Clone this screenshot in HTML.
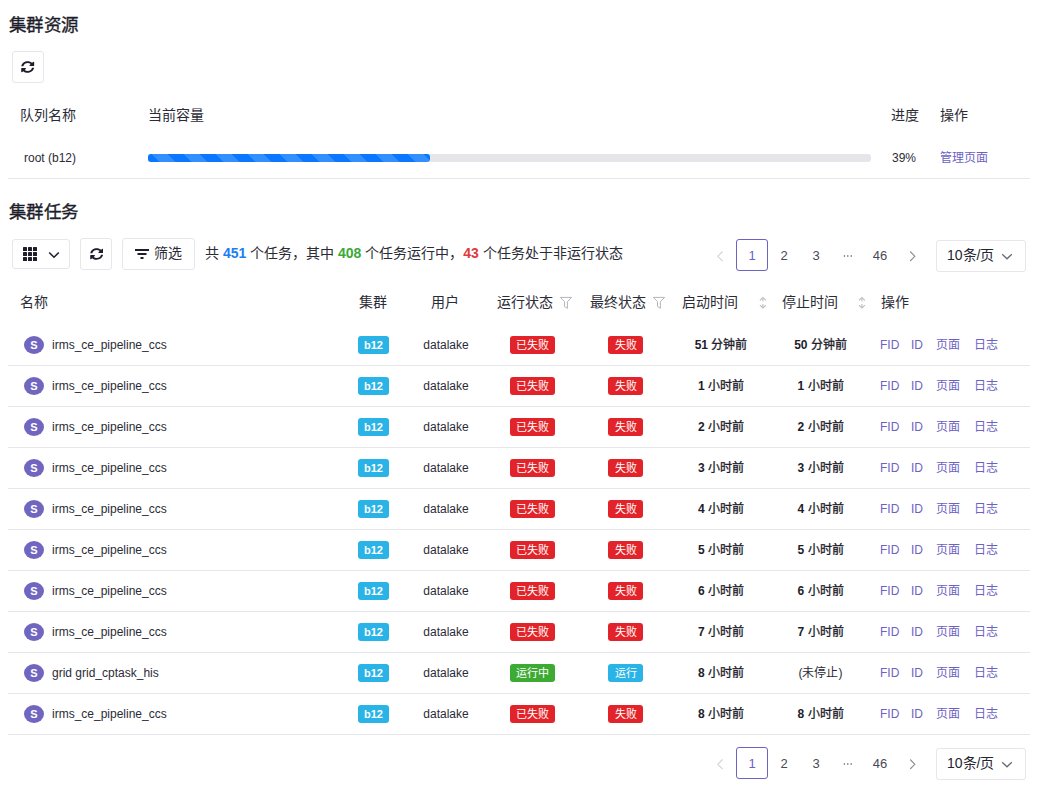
<!DOCTYPE html>
<html lang="zh-CN"><head><meta charset="utf-8"><title>集群</title>
<style>
html,body{margin:0;padding:0;background:#fff;}
body{width:1039px;height:790px;position:relative;overflow:hidden;font-family:"Liberation Sans", sans-serif;}
.t{position:absolute;white-space:nowrap;}
.cj{font-weight:500;-webkit-text-stroke:0.3px #1d1d2b;}
.b{position:absolute;}
.av{position:absolute;width:20px;height:18px;border-radius:50%;background:#7066c0;color:#fff;font-size:11px;font-weight:bold;line-height:18px;text-align:center;}
.tag{position:absolute;height:18px;line-height:19px;border-radius:3px;color:#fff;font-size:11px;font-weight:500;text-align:center;}
</style></head><body>
<div class="t" style="left:8.6px;top:11.9px;font-size:17.5px;line-height:26px;color:#1d1d2b;font-weight:500;-webkit-text-stroke:0.35px #1d1d2b;letter-spacing:0.5px;">集群资源</div>
<div class="b" style="left:12px;top:51px;width:32px;height:32px;border:1px solid #e6e6eb;border-radius:3px;box-sizing:border-box;"></div>
<svg width="13.4" height="12" viewBox="0 0 512 512" preserveAspectRatio="none" style="position:absolute;left:21.2px;top:60.6px"><path fill="#1d1d2b" d="M370.72 133.28C339.458 104.008 298.888 87.962 255.848 88c-77.458.068-144.328 53.178-162.791 126.85-1.344 5.363-6.122 9.15-11.651 9.15H24.103c-7.498 0-13.194-6.807-11.807-14.176C33.933 94.924 134.813 8 256 8c66.448 0 126.791 26.136 171.315 68.685L463.03 40.97C478.149 25.851 504 36.559 504 57.941V192c0 13.255-10.745 24-24 24H345.941c-21.382 0-32.09-25.851-16.971-40.971l41.75-41.749zM32 296h134.059c21.382 0 32.09 25.851 16.971 40.971l-41.75 41.75c31.262 29.273 71.835 45.319 114.876 45.28 77.418-.07 144.315-53.144 162.787-126.849 1.344-5.363 6.122-9.15 11.651-9.15h57.304c7.498 0 13.193 6.807 11.807 14.176C478.067 417.076 377.187 504 256 504c-66.448 0-126.791-26.136-171.315-68.685L48.97 471.03C33.851 486.149 8 475.441 8 454.059V320c0-13.255 10.745-24 24-24z"/></svg>
<div class="t" style="left:20px;top:105px;font-size:14px;line-height:20px;color:#2b2b36;font-weight:normal;">队列名称</div>
<div class="t" style="left:148px;top:105px;font-size:14px;line-height:20px;color:#2b2b36;font-weight:normal;">当前容量</div>
<div class="t" style="left:891px;top:105px;font-size:14px;line-height:20px;color:#2b2b36;font-weight:normal;">进度</div>
<div class="t" style="left:940px;top:105px;font-size:14px;line-height:20px;color:#2b2b36;font-weight:normal;">操作</div>
<div class="t" style="left:24px;top:149px;font-size:12px;line-height:18px;color:#2b2b36;font-weight:normal;">root (b12)</div>
<div class="b" style="left:148px;top:154px;width:723px;height:8px;background:#e6e5ea;border-radius:3px;"></div>
<div class="b" style="left:148px;top:154px;width:282px;height:8px;border-radius:3px;background-color:#0a77ff;background-image:repeating-linear-gradient(45deg, rgba(255,255,255,0) 0px, rgba(255,255,255,0) 8.1px, rgba(255,255,255,0.17) 8.1px, rgba(255,255,255,0.17) 19.4px, rgba(255,255,255,0) 19.4px, rgba(255,255,255,0) 22.63px);"></div>
<div class="t" style="left:892px;top:149px;font-size:12px;line-height:18px;color:#2b2b36;font-weight:normal;">39%</div>
<div class="t" style="left:940px;top:149px;font-size:12px;line-height:18px;color:#6c62c2;font-weight:normal;">管理页面</div>
<div class="b" style="left:8px;top:178px;width:1022px;height:1px;background:#e6e6eb;"></div>
<div class="t" style="left:8.6px;top:198.9px;font-size:17.5px;line-height:26px;color:#1d1d2b;font-weight:500;-webkit-text-stroke:0.35px #1d1d2b;letter-spacing:0.5px;">集群任务</div>
<div class="b" style="left:12px;top:239px;width:58px;height:30px;border:1px solid #e6e6eb;border-radius:3px;box-sizing:border-box;"></div>
<svg width="14" height="14" style="position:absolute;left:23px;top:247px" fill="#1d1d2b"><rect x="0" y="0" width="4" height="4" rx="0.6"/><rect x="5" y="0" width="4" height="4" rx="0.6"/><rect x="10" y="0" width="4" height="4" rx="0.6"/><rect x="0" y="5" width="4" height="4" rx="0.6"/><rect x="5" y="5" width="4" height="4" rx="0.6"/><rect x="10" y="5" width="4" height="4" rx="0.6"/><rect x="0" y="10" width="4" height="4" rx="0.6"/><rect x="5" y="10" width="4" height="4" rx="0.6"/><rect x="10" y="10" width="4" height="4" rx="0.6"/></svg>
<svg width="12" height="8" style="position:absolute;left:48px;top:251px"><path d="M1.2 1.5 L6 6.2 L10.8 1.5" fill="none" stroke="#1d1d2b" stroke-width="1.5"/></svg>
<div class="b" style="left:80px;top:238px;width:32px;height:32px;border:1px solid #e6e6eb;border-radius:3px;box-sizing:border-box;"></div>
<svg width="13.4" height="12" viewBox="0 0 512 512" preserveAspectRatio="none" style="position:absolute;left:89.9px;top:248.3px"><path fill="#1d1d2b" d="M370.72 133.28C339.458 104.008 298.888 87.962 255.848 88c-77.458.068-144.328 53.178-162.791 126.85-1.344 5.363-6.122 9.15-11.651 9.15H24.103c-7.498 0-13.194-6.807-11.807-14.176C33.933 94.924 134.813 8 256 8c66.448 0 126.791 26.136 171.315 68.685L463.03 40.97C478.149 25.851 504 36.559 504 57.941V192c0 13.255-10.745 24-24 24H345.941c-21.382 0-32.09-25.851-16.971-40.971l41.75-41.749zM32 296h134.059c21.382 0 32.09 25.851 16.971 40.971l-41.75 41.75c31.262 29.273 71.835 45.319 114.876 45.28 77.418-.07 144.315-53.144 162.787-126.849 1.344-5.363 6.122-9.15 11.651-9.15h57.304c7.498 0 13.193 6.807 11.807 14.176C478.067 417.076 377.187 504 256 504c-66.448 0-126.791-26.136-171.315-68.685L48.97 471.03C33.851 486.149 8 475.441 8 454.059V320c0-13.255 10.745-24 24-24z"/></svg>
<div class="b" style="left:122px;top:238px;width:73px;height:32px;border:1px solid #e6e6eb;border-radius:3px;box-sizing:border-box;"></div>
<svg width="16" height="12" style="position:absolute;left:134px;top:248px" fill="#1d1d2b"><rect x="1" y="1" width="14" height="2"/><rect x="3.5" y="5" width="9" height="2"/><rect x="6.5" y="9" width="3" height="2"/></svg>
<div class="t" style="left:154px;top:243px;font-size:14px;line-height:20px;color:#2b2b36;font-weight:normal;">筛选</div>
<div class="t" style="left:205px;top:243px;font-size:14px;line-height:20px;color:#2b2b36;font-weight:normal;white-space:nowrap;">共 <b style="color:#1a7ef5">451</b> 个任务，其中 <b style="color:#3aa935">408</b> 个任务运行中，<b style="color:#e03a3e">43</b> 个任务处于非运行状态</div>
<svg width="8" height="12" style="position:absolute;left:716px;top:250px"><path d="M6.5 1.5 L1.8 6.3 L6.5 11" fill="none" stroke="#d2d2d9" stroke-width="1.1"/></svg>
<div class="b" style="left:736px;top:239px;width:32px;height:32px;border:1px solid #6c62c2;border-radius:3px;box-sizing:border-box;"></div>
<div class="t" style="left:736.0px;top:246px;width:32px;text-align:center;font-size:13px;line-height:20px;color:#6c62c2;font-weight:normal;">1</div>
<div class="t" style="left:768.0px;top:246px;width:32px;text-align:center;font-size:13px;line-height:20px;color:#4a4a55;font-weight:normal;">2</div>
<div class="t" style="left:800.0px;top:246px;width:32px;text-align:center;font-size:13px;line-height:20px;color:#4a4a55;font-weight:normal;">3</div>
<svg width="12" height="4" style="position:absolute;left:842px;top:253.6px" fill="#55555f"><circle cx="2.4" cy="2" r="0.8"/><circle cx="5.8" cy="2" r="0.8"/><circle cx="9.2" cy="2" r="0.8"/></svg>
<div class="t" style="left:864.0px;top:246px;width:32px;text-align:center;font-size:13px;line-height:20px;color:#4a4a55;font-weight:normal;">46</div>
<svg width="8" height="12" style="position:absolute;left:909px;top:250px"><path d="M1.2 1.5 L5.8 6.3 L1.2 11" fill="none" stroke="#8c8c96" stroke-width="1.1"/></svg>
<div class="b" style="left:936px;top:240px;width:90px;height:32px;border:1px solid #e6e6eb;border-radius:3px;box-sizing:border-box;"></div>
<div class="t" style="left:947px;top:245px;font-size:14px;line-height:20px;color:#25252f;font-weight:normal;">10条/页</div>
<svg width="12" height="8" style="position:absolute;left:1001px;top:252.5px"><path d="M1.2 1.2 L6 5.8 L10.8 1.2" fill="none" stroke="#6a6a75" stroke-width="1.3"/></svg>
<div class="t" style="left:20px;top:292px;font-size:14px;line-height:20px;color:#2b2b36;font-weight:normal;">名称</div>
<div class="t" style="left:333.0px;top:292px;width:80px;text-align:center;font-size:14px;line-height:20px;color:#2b2b36;font-weight:normal;">集群</div>
<div class="t" style="left:405.0px;top:292px;width:80px;text-align:center;font-size:14px;line-height:20px;color:#2b2b36;font-weight:normal;">用户</div>
<div class="t" style="left:497px;top:292px;font-size:14px;line-height:20px;color:#2b2b36;font-weight:normal;">运行状态</div>
<div class="t" style="left:590px;top:292px;font-size:14px;line-height:20px;color:#2b2b36;font-weight:normal;">最终状态</div>
<div class="t" style="left:682px;top:292px;font-size:14px;line-height:20px;color:#2b2b36;font-weight:normal;">启动时间</div>
<div class="t" style="left:782px;top:292px;font-size:14px;line-height:20px;color:#2b2b36;font-weight:normal;">停止时间</div>
<div class="t" style="left:881px;top:292px;font-size:14px;line-height:20px;color:#2b2b36;font-weight:normal;">操作</div>
<svg width="14" height="14" style="position:absolute;left:559px;top:296px"><path d="M1.3 1.4 L12.7 1.4 L8.4 5.6 L8.4 12.3 L5.5 10.5 L5.5 5.6 Z" fill="none" stroke="#b5b5bd" stroke-width="1" stroke-linejoin="miter"/></svg>
<svg width="14" height="14" style="position:absolute;left:652px;top:296px"><path d="M1.3 1.4 L12.7 1.4 L8.4 5.6 L8.4 12.3 L5.5 10.5 L5.5 5.6 Z" fill="none" stroke="#b5b5bd" stroke-width="1" stroke-linejoin="miter"/></svg>
<svg width="9" height="14" style="position:absolute;left:759.3px;top:296px" fill="none" stroke="#bcbcc4" stroke-width="1.1"><path d="M0.9 4.4 L3.9 1.5 L6.9 4.4"/><path d="M3.9 2.5 L3.9 5.6"/><path d="M0.9 9.1 L3.9 12 L6.9 9.1"/><path d="M3.9 8 L3.9 11"/></svg>
<svg width="9" height="14" style="position:absolute;left:858.3px;top:296px" fill="none" stroke="#bcbcc4" stroke-width="1.1"><path d="M0.9 4.4 L3.9 1.5 L6.9 4.4"/><path d="M3.9 2.5 L3.9 5.6"/><path d="M0.9 9.1 L3.9 12 L6.9 9.1"/><path d="M3.9 8 L3.9 11"/></svg>
<div class="av" style="left:24px;top:336px">S</div>
<div class="t" style="left:52px;top:336px;font-size:12px;line-height:18px;color:#2b2b36;font-weight:normal;">irms_ce_pipeline_ccs</div>
<div class="tag" style="left:358px;top:336px;width:31px;background:#29b3e6;font-weight:bold;font-size:11px;line-height:18px">b12</div>
<div class="t" style="left:396.0px;top:336px;width:100px;text-align:center;font-size:12px;line-height:18px;color:#2b2b36;font-weight:normal;">datalake</div>
<div class="tag" style="left:510px;top:336px;width:45px;background:#e2242a">已失败</div>
<div class="tag" style="left:608px;top:336px;width:35px;background:#e2242a">失败</div>
<div class="t" style="left:671.0px;top:336px;width:100px;text-align:center;font-size:12px;line-height:18px;color:#1d1d2b;font-weight:normal;"><b>51</b> <span class="cj">分钟前</span></div>
<div class="t" style="left:770.5px;top:336px;width:100px;text-align:center;font-size:12px;line-height:18px;color:#1d1d2b;font-weight:normal;"><b>50</b> <span class="cj">分钟前</span></div>
<div class="t" style="left:880px;top:336px;font-size:12px;line-height:18px;color:#6c62c2;font-weight:normal;">FID</div>
<div class="t" style="left:911px;top:336px;font-size:12px;line-height:18px;color:#6c62c2;font-weight:normal;">ID</div>
<div class="t" style="left:936px;top:336px;font-size:12px;line-height:18px;color:#6c62c2;font-weight:normal;">页面</div>
<div class="t" style="left:974px;top:336px;font-size:12px;line-height:18px;color:#6c62c2;font-weight:normal;">日志</div>
<div class="b" style="left:8px;top:365px;width:1022px;height:1px;background:#e6e6eb;"></div>
<div class="av" style="left:24px;top:377px">S</div>
<div class="t" style="left:52px;top:377px;font-size:12px;line-height:18px;color:#2b2b36;font-weight:normal;">irms_ce_pipeline_ccs</div>
<div class="tag" style="left:358px;top:377px;width:31px;background:#29b3e6;font-weight:bold;font-size:11px;line-height:18px">b12</div>
<div class="t" style="left:396.0px;top:377px;width:100px;text-align:center;font-size:12px;line-height:18px;color:#2b2b36;font-weight:normal;">datalake</div>
<div class="tag" style="left:510px;top:377px;width:45px;background:#e2242a">已失败</div>
<div class="tag" style="left:608px;top:377px;width:35px;background:#e2242a">失败</div>
<div class="t" style="left:671.0px;top:377px;width:100px;text-align:center;font-size:12px;line-height:18px;color:#1d1d2b;font-weight:normal;"><b>1</b> <span class="cj">小时前</span></div>
<div class="t" style="left:770.5px;top:377px;width:100px;text-align:center;font-size:12px;line-height:18px;color:#1d1d2b;font-weight:normal;"><b>1</b> <span class="cj">小时前</span></div>
<div class="t" style="left:880px;top:377px;font-size:12px;line-height:18px;color:#6c62c2;font-weight:normal;">FID</div>
<div class="t" style="left:911px;top:377px;font-size:12px;line-height:18px;color:#6c62c2;font-weight:normal;">ID</div>
<div class="t" style="left:936px;top:377px;font-size:12px;line-height:18px;color:#6c62c2;font-weight:normal;">页面</div>
<div class="t" style="left:974px;top:377px;font-size:12px;line-height:18px;color:#6c62c2;font-weight:normal;">日志</div>
<div class="b" style="left:8px;top:406px;width:1022px;height:1px;background:#e6e6eb;"></div>
<div class="av" style="left:24px;top:418px">S</div>
<div class="t" style="left:52px;top:418px;font-size:12px;line-height:18px;color:#2b2b36;font-weight:normal;">irms_ce_pipeline_ccs</div>
<div class="tag" style="left:358px;top:418px;width:31px;background:#29b3e6;font-weight:bold;font-size:11px;line-height:18px">b12</div>
<div class="t" style="left:396.0px;top:418px;width:100px;text-align:center;font-size:12px;line-height:18px;color:#2b2b36;font-weight:normal;">datalake</div>
<div class="tag" style="left:510px;top:418px;width:45px;background:#e2242a">已失败</div>
<div class="tag" style="left:608px;top:418px;width:35px;background:#e2242a">失败</div>
<div class="t" style="left:671.0px;top:418px;width:100px;text-align:center;font-size:12px;line-height:18px;color:#1d1d2b;font-weight:normal;"><b>2</b> <span class="cj">小时前</span></div>
<div class="t" style="left:770.5px;top:418px;width:100px;text-align:center;font-size:12px;line-height:18px;color:#1d1d2b;font-weight:normal;"><b>2</b> <span class="cj">小时前</span></div>
<div class="t" style="left:880px;top:418px;font-size:12px;line-height:18px;color:#6c62c2;font-weight:normal;">FID</div>
<div class="t" style="left:911px;top:418px;font-size:12px;line-height:18px;color:#6c62c2;font-weight:normal;">ID</div>
<div class="t" style="left:936px;top:418px;font-size:12px;line-height:18px;color:#6c62c2;font-weight:normal;">页面</div>
<div class="t" style="left:974px;top:418px;font-size:12px;line-height:18px;color:#6c62c2;font-weight:normal;">日志</div>
<div class="b" style="left:8px;top:447px;width:1022px;height:1px;background:#e6e6eb;"></div>
<div class="av" style="left:24px;top:459px">S</div>
<div class="t" style="left:52px;top:459px;font-size:12px;line-height:18px;color:#2b2b36;font-weight:normal;">irms_ce_pipeline_ccs</div>
<div class="tag" style="left:358px;top:459px;width:31px;background:#29b3e6;font-weight:bold;font-size:11px;line-height:18px">b12</div>
<div class="t" style="left:396.0px;top:459px;width:100px;text-align:center;font-size:12px;line-height:18px;color:#2b2b36;font-weight:normal;">datalake</div>
<div class="tag" style="left:510px;top:459px;width:45px;background:#e2242a">已失败</div>
<div class="tag" style="left:608px;top:459px;width:35px;background:#e2242a">失败</div>
<div class="t" style="left:671.0px;top:459px;width:100px;text-align:center;font-size:12px;line-height:18px;color:#1d1d2b;font-weight:normal;"><b>3</b> <span class="cj">小时前</span></div>
<div class="t" style="left:770.5px;top:459px;width:100px;text-align:center;font-size:12px;line-height:18px;color:#1d1d2b;font-weight:normal;"><b>3</b> <span class="cj">小时前</span></div>
<div class="t" style="left:880px;top:459px;font-size:12px;line-height:18px;color:#6c62c2;font-weight:normal;">FID</div>
<div class="t" style="left:911px;top:459px;font-size:12px;line-height:18px;color:#6c62c2;font-weight:normal;">ID</div>
<div class="t" style="left:936px;top:459px;font-size:12px;line-height:18px;color:#6c62c2;font-weight:normal;">页面</div>
<div class="t" style="left:974px;top:459px;font-size:12px;line-height:18px;color:#6c62c2;font-weight:normal;">日志</div>
<div class="b" style="left:8px;top:488px;width:1022px;height:1px;background:#e6e6eb;"></div>
<div class="av" style="left:24px;top:500px">S</div>
<div class="t" style="left:52px;top:500px;font-size:12px;line-height:18px;color:#2b2b36;font-weight:normal;">irms_ce_pipeline_ccs</div>
<div class="tag" style="left:358px;top:500px;width:31px;background:#29b3e6;font-weight:bold;font-size:11px;line-height:18px">b12</div>
<div class="t" style="left:396.0px;top:500px;width:100px;text-align:center;font-size:12px;line-height:18px;color:#2b2b36;font-weight:normal;">datalake</div>
<div class="tag" style="left:510px;top:500px;width:45px;background:#e2242a">已失败</div>
<div class="tag" style="left:608px;top:500px;width:35px;background:#e2242a">失败</div>
<div class="t" style="left:671.0px;top:500px;width:100px;text-align:center;font-size:12px;line-height:18px;color:#1d1d2b;font-weight:normal;"><b>4</b> <span class="cj">小时前</span></div>
<div class="t" style="left:770.5px;top:500px;width:100px;text-align:center;font-size:12px;line-height:18px;color:#1d1d2b;font-weight:normal;"><b>4</b> <span class="cj">小时前</span></div>
<div class="t" style="left:880px;top:500px;font-size:12px;line-height:18px;color:#6c62c2;font-weight:normal;">FID</div>
<div class="t" style="left:911px;top:500px;font-size:12px;line-height:18px;color:#6c62c2;font-weight:normal;">ID</div>
<div class="t" style="left:936px;top:500px;font-size:12px;line-height:18px;color:#6c62c2;font-weight:normal;">页面</div>
<div class="t" style="left:974px;top:500px;font-size:12px;line-height:18px;color:#6c62c2;font-weight:normal;">日志</div>
<div class="b" style="left:8px;top:529px;width:1022px;height:1px;background:#e6e6eb;"></div>
<div class="av" style="left:24px;top:541px">S</div>
<div class="t" style="left:52px;top:541px;font-size:12px;line-height:18px;color:#2b2b36;font-weight:normal;">irms_ce_pipeline_ccs</div>
<div class="tag" style="left:358px;top:541px;width:31px;background:#29b3e6;font-weight:bold;font-size:11px;line-height:18px">b12</div>
<div class="t" style="left:396.0px;top:541px;width:100px;text-align:center;font-size:12px;line-height:18px;color:#2b2b36;font-weight:normal;">datalake</div>
<div class="tag" style="left:510px;top:541px;width:45px;background:#e2242a">已失败</div>
<div class="tag" style="left:608px;top:541px;width:35px;background:#e2242a">失败</div>
<div class="t" style="left:671.0px;top:541px;width:100px;text-align:center;font-size:12px;line-height:18px;color:#1d1d2b;font-weight:normal;"><b>5</b> <span class="cj">小时前</span></div>
<div class="t" style="left:770.5px;top:541px;width:100px;text-align:center;font-size:12px;line-height:18px;color:#1d1d2b;font-weight:normal;"><b>5</b> <span class="cj">小时前</span></div>
<div class="t" style="left:880px;top:541px;font-size:12px;line-height:18px;color:#6c62c2;font-weight:normal;">FID</div>
<div class="t" style="left:911px;top:541px;font-size:12px;line-height:18px;color:#6c62c2;font-weight:normal;">ID</div>
<div class="t" style="left:936px;top:541px;font-size:12px;line-height:18px;color:#6c62c2;font-weight:normal;">页面</div>
<div class="t" style="left:974px;top:541px;font-size:12px;line-height:18px;color:#6c62c2;font-weight:normal;">日志</div>
<div class="b" style="left:8px;top:570px;width:1022px;height:1px;background:#e6e6eb;"></div>
<div class="av" style="left:24px;top:582px">S</div>
<div class="t" style="left:52px;top:582px;font-size:12px;line-height:18px;color:#2b2b36;font-weight:normal;">irms_ce_pipeline_ccs</div>
<div class="tag" style="left:358px;top:582px;width:31px;background:#29b3e6;font-weight:bold;font-size:11px;line-height:18px">b12</div>
<div class="t" style="left:396.0px;top:582px;width:100px;text-align:center;font-size:12px;line-height:18px;color:#2b2b36;font-weight:normal;">datalake</div>
<div class="tag" style="left:510px;top:582px;width:45px;background:#e2242a">已失败</div>
<div class="tag" style="left:608px;top:582px;width:35px;background:#e2242a">失败</div>
<div class="t" style="left:671.0px;top:582px;width:100px;text-align:center;font-size:12px;line-height:18px;color:#1d1d2b;font-weight:normal;"><b>6</b> <span class="cj">小时前</span></div>
<div class="t" style="left:770.5px;top:582px;width:100px;text-align:center;font-size:12px;line-height:18px;color:#1d1d2b;font-weight:normal;"><b>6</b> <span class="cj">小时前</span></div>
<div class="t" style="left:880px;top:582px;font-size:12px;line-height:18px;color:#6c62c2;font-weight:normal;">FID</div>
<div class="t" style="left:911px;top:582px;font-size:12px;line-height:18px;color:#6c62c2;font-weight:normal;">ID</div>
<div class="t" style="left:936px;top:582px;font-size:12px;line-height:18px;color:#6c62c2;font-weight:normal;">页面</div>
<div class="t" style="left:974px;top:582px;font-size:12px;line-height:18px;color:#6c62c2;font-weight:normal;">日志</div>
<div class="b" style="left:8px;top:611px;width:1022px;height:1px;background:#e6e6eb;"></div>
<div class="av" style="left:24px;top:623px">S</div>
<div class="t" style="left:52px;top:623px;font-size:12px;line-height:18px;color:#2b2b36;font-weight:normal;">irms_ce_pipeline_ccs</div>
<div class="tag" style="left:358px;top:623px;width:31px;background:#29b3e6;font-weight:bold;font-size:11px;line-height:18px">b12</div>
<div class="t" style="left:396.0px;top:623px;width:100px;text-align:center;font-size:12px;line-height:18px;color:#2b2b36;font-weight:normal;">datalake</div>
<div class="tag" style="left:510px;top:623px;width:45px;background:#e2242a">已失败</div>
<div class="tag" style="left:608px;top:623px;width:35px;background:#e2242a">失败</div>
<div class="t" style="left:671.0px;top:623px;width:100px;text-align:center;font-size:12px;line-height:18px;color:#1d1d2b;font-weight:normal;"><b>7</b> <span class="cj">小时前</span></div>
<div class="t" style="left:770.5px;top:623px;width:100px;text-align:center;font-size:12px;line-height:18px;color:#1d1d2b;font-weight:normal;"><b>7</b> <span class="cj">小时前</span></div>
<div class="t" style="left:880px;top:623px;font-size:12px;line-height:18px;color:#6c62c2;font-weight:normal;">FID</div>
<div class="t" style="left:911px;top:623px;font-size:12px;line-height:18px;color:#6c62c2;font-weight:normal;">ID</div>
<div class="t" style="left:936px;top:623px;font-size:12px;line-height:18px;color:#6c62c2;font-weight:normal;">页面</div>
<div class="t" style="left:974px;top:623px;font-size:12px;line-height:18px;color:#6c62c2;font-weight:normal;">日志</div>
<div class="b" style="left:8px;top:652px;width:1022px;height:1px;background:#e6e6eb;"></div>
<div class="av" style="left:24px;top:664px">S</div>
<div class="t" style="left:52px;top:664px;font-size:12px;line-height:18px;color:#2b2b36;font-weight:normal;">grid grid_cptask_his</div>
<div class="tag" style="left:358px;top:664px;width:31px;background:#29b3e6;font-weight:bold;font-size:11px;line-height:18px">b12</div>
<div class="t" style="left:396.0px;top:664px;width:100px;text-align:center;font-size:12px;line-height:18px;color:#2b2b36;font-weight:normal;">datalake</div>
<div class="tag" style="left:510px;top:664px;width:45px;background:#3daa34">运行中</div>
<div class="tag" style="left:608px;top:664px;width:35px;background:#29b3e6">运行</div>
<div class="t" style="left:671.0px;top:664px;width:100px;text-align:center;font-size:12px;line-height:18px;color:#1d1d2b;font-weight:normal;"><b>8</b> <span class="cj">小时前</span></div>
<div class="t" style="left:770.5px;top:664px;width:100px;text-align:center;font-size:12px;line-height:18px;color:#2b2b36;font-weight:normal;">(未停止)</div>
<div class="t" style="left:880px;top:664px;font-size:12px;line-height:18px;color:#6c62c2;font-weight:normal;">FID</div>
<div class="t" style="left:911px;top:664px;font-size:12px;line-height:18px;color:#6c62c2;font-weight:normal;">ID</div>
<div class="t" style="left:936px;top:664px;font-size:12px;line-height:18px;color:#6c62c2;font-weight:normal;">页面</div>
<div class="t" style="left:974px;top:664px;font-size:12px;line-height:18px;color:#6c62c2;font-weight:normal;">日志</div>
<div class="b" style="left:8px;top:693px;width:1022px;height:1px;background:#e6e6eb;"></div>
<div class="av" style="left:24px;top:705px">S</div>
<div class="t" style="left:52px;top:705px;font-size:12px;line-height:18px;color:#2b2b36;font-weight:normal;">irms_ce_pipeline_ccs</div>
<div class="tag" style="left:358px;top:705px;width:31px;background:#29b3e6;font-weight:bold;font-size:11px;line-height:18px">b12</div>
<div class="t" style="left:396.0px;top:705px;width:100px;text-align:center;font-size:12px;line-height:18px;color:#2b2b36;font-weight:normal;">datalake</div>
<div class="tag" style="left:510px;top:705px;width:45px;background:#e2242a">已失败</div>
<div class="tag" style="left:608px;top:705px;width:35px;background:#e2242a">失败</div>
<div class="t" style="left:671.0px;top:705px;width:100px;text-align:center;font-size:12px;line-height:18px;color:#1d1d2b;font-weight:normal;"><b>8</b> <span class="cj">小时前</span></div>
<div class="t" style="left:770.5px;top:705px;width:100px;text-align:center;font-size:12px;line-height:18px;color:#1d1d2b;font-weight:normal;"><b>8</b> <span class="cj">小时前</span></div>
<div class="t" style="left:880px;top:705px;font-size:12px;line-height:18px;color:#6c62c2;font-weight:normal;">FID</div>
<div class="t" style="left:911px;top:705px;font-size:12px;line-height:18px;color:#6c62c2;font-weight:normal;">ID</div>
<div class="t" style="left:936px;top:705px;font-size:12px;line-height:18px;color:#6c62c2;font-weight:normal;">页面</div>
<div class="t" style="left:974px;top:705px;font-size:12px;line-height:18px;color:#6c62c2;font-weight:normal;">日志</div>
<div class="b" style="left:8px;top:734px;width:1022px;height:1px;background:#e6e6eb;"></div>
<svg width="8" height="12" style="position:absolute;left:716px;top:758px"><path d="M6.5 1.5 L1.8 6.3 L6.5 11" fill="none" stroke="#d2d2d9" stroke-width="1.1"/></svg>
<div class="b" style="left:736px;top:747px;width:32px;height:32px;border:1px solid #6c62c2;border-radius:3px;box-sizing:border-box;"></div>
<div class="t" style="left:736.0px;top:754px;width:32px;text-align:center;font-size:13px;line-height:20px;color:#6c62c2;font-weight:normal;">1</div>
<div class="t" style="left:768.0px;top:754px;width:32px;text-align:center;font-size:13px;line-height:20px;color:#4a4a55;font-weight:normal;">2</div>
<div class="t" style="left:800.0px;top:754px;width:32px;text-align:center;font-size:13px;line-height:20px;color:#4a4a55;font-weight:normal;">3</div>
<svg width="12" height="4" style="position:absolute;left:842px;top:761.6px" fill="#55555f"><circle cx="2.4" cy="2" r="0.8"/><circle cx="5.8" cy="2" r="0.8"/><circle cx="9.2" cy="2" r="0.8"/></svg>
<div class="t" style="left:864.0px;top:754px;width:32px;text-align:center;font-size:13px;line-height:20px;color:#4a4a55;font-weight:normal;">46</div>
<svg width="8" height="12" style="position:absolute;left:909px;top:758px"><path d="M1.2 1.5 L5.8 6.3 L1.2 11" fill="none" stroke="#8c8c96" stroke-width="1.1"/></svg>
<div class="b" style="left:936px;top:748px;width:90px;height:32px;border:1px solid #e6e6eb;border-radius:3px;box-sizing:border-box;"></div>
<div class="t" style="left:947px;top:753px;font-size:14px;line-height:20px;color:#25252f;font-weight:normal;">10条/页</div>
<svg width="12" height="8" style="position:absolute;left:1001px;top:760.5px"><path d="M1.2 1.2 L6 5.8 L10.8 1.2" fill="none" stroke="#6a6a75" stroke-width="1.3"/></svg>
</body></html>
